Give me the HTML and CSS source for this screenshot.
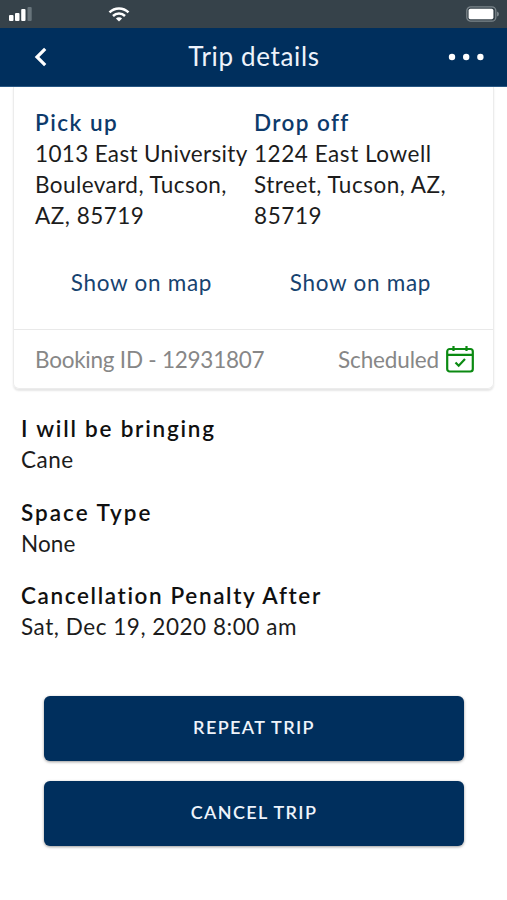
FILE: index.html
```html
<!DOCTYPE html>
<html lang="en">
<head>
<meta charset="utf-8">
<title>Trip details</title>
<link rel="stylesheet" href="styles.css">
</head>
<body>
<div class="statusbar">
  <svg class="signal" width="24" height="16" viewBox="0 0 24 16"><g fill="#fff"><rect x="0" y="9" width="4.500" height="6" rx="1"/><rect x="6" y="7" width="4.500" height="8" rx="1"/><rect x="12.200" y="3" width="4.300" height="12" rx="1"/></g><rect x="18.500" y="1" width="4.200" height="14" rx="1" fill="#68747b"/></svg>
  <svg class="wifi" width="22" height="16" viewBox="0 0 22 16"><g fill="none" stroke="#fff" stroke-width="2.500"><path d="M1.500 6.300a13.500 13.500 0 0 1 19 0"/><path d="M5 10a8.500 8.500 0 0 1 12 0"/></g><path d="M11 15.500L7.900 12.500a4.400 4.400 0 0 1 6.200 0z" fill="#fff"/></svg>
  <svg class="battery" width="34" height="16" viewBox="0 0 34 16"><rect x=".8" y=".8" width="29" height="14.400" rx="4" fill="none" stroke="#7b858b" stroke-width="1.300"/><rect x="2.600" y="2.800" width="24.800" height="10.400" rx="1.800" fill="#fff"/><path d="M31 5.500q2 .5 2 2.500t-2 2.500z" fill="#7b858b"/></svg>
</div>
<header class="navbar">
  <svg class="back" width="14" height="20" viewBox="0 0 14 20"><path d="M12.200 1.800L4 10l8.200 8.200" fill="none" stroke="#fff" stroke-width="3.200"/></svg>
  <h1 class="title">Trip details</h1>
  <svg class="more" width="36" height="8" viewBox="0 0 36 8"><g fill="#fff"><circle cx="4" cy="4" r="3.200"/><circle cx="18.200" cy="4" r="3.200"/><circle cx="32.400" cy="4" r="3.200"/></g></svg>
</header>
<main>
  <section class="card">
    <div class="stops">
      <div class="stop">
        <h2 class="label pick">Pick up</h2>
        <p class="text"><span class="a1">1013 East University</span><br><span class="a2">Boulevard, Tucson,</span><br><span class="a3">AZ, 85719</span></p>
        <a class="map">Show on map</a>
      </div>
      <div class="stop">
        <h2 class="label drop">Drop off</h2>
        <p class="text"><span class="b1">1224 East Lowell</span><br><span class="b2">Street, Tucson, AZ,</span><br><span class="b3">85719</span></p>
        <a class="map">Show on map</a>
      </div>
    </div>
    <div class="booking">
      <span class="bookid">Booking ID - 12931807</span>
      <span class="state">Scheduled</span>
      <svg class="cal" width="28" height="28" viewBox="0 0 28 28"><g fill="none" stroke="#0b8a12" stroke-width="2.200"><rect x="1.200" y="4" width="25.600" height="22.500" rx="2.500"/><path d="M1.200 9.800h25.600M7.500 1v5M20.500 1v5"/><path d="M9.500 17.500l3.200 3.200 6.300-6.700"/></g></svg>
    </div>
  </section>
  <section class="info">
    <h2 class="label h1">I will be bringing</h2><p class="text v1">Cane</p>
    <h2 class="label h2">Space Type</h2><p class="text v2">None</p>
    <h2 class="label h3">Cancellation Penalty After</h2><p class="text v3">Sat, Dec 19, 2020 8:00 am</p>
  </section>
  <div class="actions">
    <button class="btn repeat">REPEAT TRIP</button>
    <button class="btn cancel">CANCEL TRIP</button>
  </div>
</main>
</body>
</html>
```
FILE: styles.css
```css
* { box-sizing: border-box; margin: 0; padding: 0; }
body { background: #fff; color: #1c1c1c; font: 400 22.5px/31px Lato, "Noto Sans", sans-serif; height: 900px; overflow: hidden; white-space: nowrap; }
svg { display: block; flex: none; }
.statusbar { height: 28px; background: #36424a; display: flex; align-items: center; padding: 0 7px 0 9px; }
.wifi { margin-left: 75px; }
.battery { margin-left: auto; }
.navbar { height: 59px; background: #002f5d; border-bottom: 1px solid #285783; display: flex; align-items: center; padding: 0 23px 0 33px; color: #eef3fb; }
.title { flex: 1; text-align: center; font-weight: 400; font-size: 26px; letter-spacing: .65px; padding: 0 0 2px 13px; }
.card { margin: 0 13px; height: 302px; border: 1px solid #ececec; border-top: 0; border-radius: 0 0 6px 6px; box-shadow: 0 2px 2px rgba(0,0,0,.1); }
.stops { display: grid; grid-template-columns: 219px 1fr; height: 243px; padding: 20px 0 0 21px; border-bottom: 1px solid #e9e9e9; }
.label { font-size: 22.5px; line-height: 31px; font-weight: 600; letter-spacing: 1px; color: #101010; }
.stop .label { color: #0d3a6b; }
.label.pick { letter-spacing: 1.5px; }
.label.drop { letter-spacing: 1.4px; }
.a1 { letter-spacing: .34px; }
.a2 { letter-spacing: .43px; }
.a3 { letter-spacing: .5px; }
.b1 { letter-spacing: .55px; }
.b2 { letter-spacing: .5px; }
.b3 { letter-spacing: .6px; }
.map { display: block; margin-top: 36px; text-align: center; width: 213px; color: #174370; letter-spacing: .72px; }
.booking { display: flex; align-items: center; height: 58px; padding: 0 19px 0 21px; color: #878787; }
.bookid { letter-spacing: -.24px; }
.state { margin-left: auto; margin-right: 7px; letter-spacing: -.15px; }
.info { padding: 24px 21px 0; }
.info .text { margin-bottom: 21.5px; }
.label.h1 { letter-spacing: 1.78px; }
.label.h2 { letter-spacing: 2px; }
.label.h3 { letter-spacing: 1.63px; }
.v1 { letter-spacing: .5px; }
.v2 { letter-spacing: .1px; }
.v3 { letter-spacing: .54px; }
.actions { display: flex; flex-direction: column; gap: 20px; padding: 32px 43px 0 44px; }
.btn { height: 65px; padding-bottom: 2px; border: 0; border-radius: 6px; background: #002f5d; color: #eef3fb; font: 600 18px/24px Lato, "Noto Sans", sans-serif; letter-spacing: 1.37px; box-shadow: 0 1px 3px rgba(0,0,0,.4); }
```
